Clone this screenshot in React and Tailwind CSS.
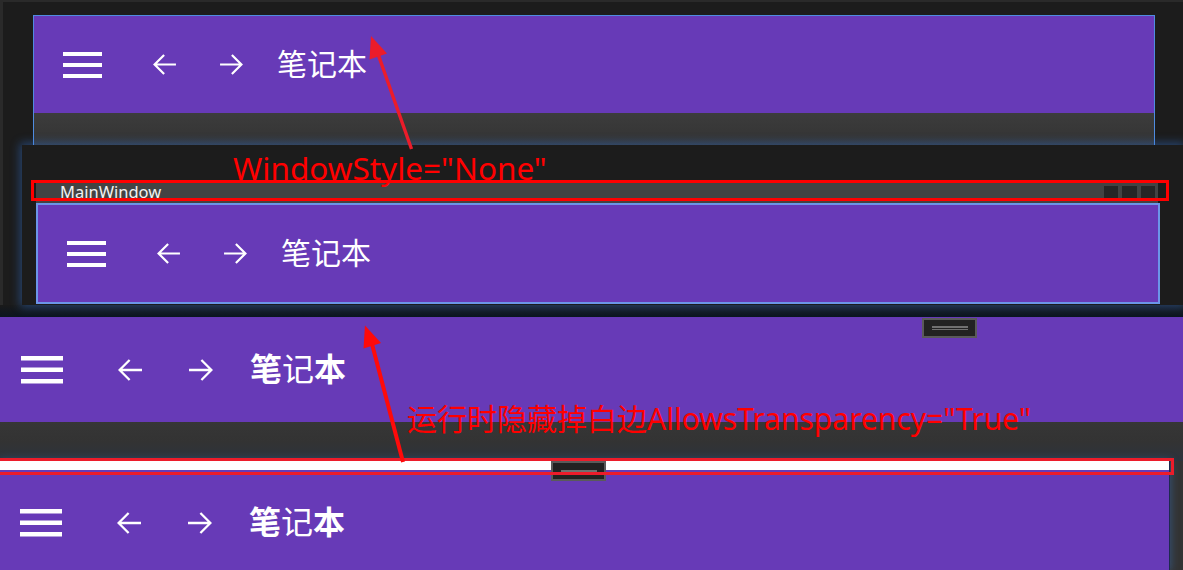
import React from "react";

function Hamburger({ big }) {
  if (big) {
    return (
      <svg width="42" height="28" viewBox="0 0 42 28" className="shrink-0">
        <rect x="0" y="0" width="42" height="4.5" fill="#fff" />
        <rect x="0" y="11.5" width="42" height="4.5" fill="#fff" />
        <rect x="0" y="23" width="42" height="4.5" fill="#fff" />
      </svg>
    );
  }
  return (
    <svg width="39" height="26" viewBox="0 0 39 26" className="shrink-0">
      <rect x="0" y="0" width="39" height="4" fill="#fff" />
      <rect x="0" y="11" width="39" height="4" fill="#fff" />
      <rect x="0" y="22" width="39" height="4" fill="#fff" />
    </svg>
  );
}

function Arrow({ dir, className }) {
  const d =
    dir === "left"
      ? "M1.6 11H24M11.6 1L1.6 11l10 10"
      : "M0 11H22.4M12.4 1l10 10-10 10";
  return (
    <svg viewBox="0 0 24 22" className={`shrink-0 ${className}`}>
      <path d={d} fill="none" stroke="#fff" strokeWidth="2.3" />
    </svg>
  );
}

function Toolbar({ big, className }) {
  return (
    <div className={`flex items-center bg-[#673ab7] ${className}`}>
      <Hamburger big={big} />
      {big ? (
        <>
          <Arrow dir="left" className="ml-[55px] w-[24px] h-[22px]" />
          <Arrow dir="right" className="ml-[47px] w-[24px] h-[22px]" />
          <span className="ml-[37px] mb-[5px] text-[32px] leading-none text-white font-bold font-['Noto_Sans_CJK_SC',sans-serif]">
            笔<span className="font-normal">记</span>本
          </span>
        </>
      ) : (
        <>
          <Arrow dir="left" className="ml-[51px] w-[23px] h-[21px]" />
          <Arrow dir="right" className="ml-[44px] w-[23px] h-[21px]" />
          <span className="ml-[34px] mb-[5px] text-[30px] leading-none text-white font-['Noto_Sans_CJK_SC',sans-serif]">
            笔记本
          </span>
        </>
      )}
    </div>
  );
}

function Gripper({ className, lines }) {
  return (
    <div
      className={`absolute w-[55px] h-[20px] border-2 border-[#5a5a5a] bg-[#222] flex flex-col items-center justify-center gap-[1px] ${className}`}
    >
      {Array.from({ length: lines }).map((_, i) => (
        <div key={i} className="w-[36px] h-[1.5px] bg-[#707070]" />
      ))}
    </div>
  );
}

export default function App() {
  return (
    <div className="relative w-[1183px] h-[570px] overflow-hidden bg-[#1c1c1c] font-['Noto_Sans','Noto_Sans_CJK_SC',sans-serif]">
      {/* window 1 */}
      <div className="h-[145px] border-l-[3px] border-t-2 border-[#2a2a2a] pl-[30px] pt-[13px] pr-[28px]">
        <div className="h-full border border-b-0 border-[#4f8ce0] flex flex-col">
          <Toolbar className="h-[97px] pl-[29px] shrink-0" />
          <div className="flex-1 bg-linear-to-b from-[#3c3c3c] to-[#333]" />
        </div>
      </div>

      {/* window 2 with title bar */}
      <div className="flex h-[160px] border-l-[3px] border-[#2a2a2a]">
        <div className="w-[19px]" />
        <div className="relative flex-1 bg-[#1c1c1c] shadow-[0_0_9px_2px_rgba(50,120,220,0.45)] pt-[37px] pl-[14px]">
          <div className="w-[1122px] h-[21px] bg-[#434343] flex items-start pl-[24px] pr-[3px]">
            <span className="text-[16.5px] leading-[19px] text-[#f2f2f2] font-['Noto_Sans',sans-serif]">
              MainWindow
            </span>
            <div className="ml-auto mt-[4px] flex gap-[4px]">
              <div className="w-[14px] h-[13px] bg-[#262626]" />
              <div className="w-[15px] h-[13px] bg-[#262626]" />
              <div className="w-[14px] h-[13px] bg-[#262626]" />
            </div>
          </div>
          <div className="w-[1124px] h-[101px] border-2 border-[#6b95e8]">
            <Toolbar className="h-full pl-[29px]" />
          </div>
        </div>
      </div>
      <div className="h-[12px] bg-linear-to-b from-[#1a1a1a] to-[#0b1520]" />

      {/* window 3, borderless */}
      <Toolbar big className="h-[105px] pl-[21px]" />
      <div className="h-[39px] bg-linear-to-b from-[#363636] via-[#333] to-[#2c333d]" />

      {/* window 4, transparency */}
      <div className="flex h-[109px]">
        <div className="relative w-[1170px] border-r border-[#1d2a4f] shadow-[0_0_8px_1px_rgba(60,130,220,0.4)]">
          <div className="h-[9px] bg-white" />
          <Toolbar big className="h-[105px] pl-[20px]" />
        </div>
        <div className="flex-1 bg-[#333]" />
      </div>

      {/* overlays */}
      <Gripper lines={2} className="left-[922px] top-[318px]" />
      <Gripper lines={1} className="left-[551px] top-[461px]" />

      <div className="absolute left-[31px] top-[180px] w-[1138px] h-[21px] border-[3px] border-[#ff0000]" />
      <div className="absolute left-[-5px] top-[458px] w-[1179px] h-[17px] border-[3px] border-[#ec1c2a]" />

      <div className="absolute left-[233px] top-[148px] text-[31.5px] leading-[40px] text-[#ff0000] whitespace-nowrap">
        WindowStyle="None"
      </div>
      <div className="absolute left-[407px] top-[399px] text-[30px] leading-[40px] text-[#ff0000] whitespace-nowrap">
        运行时隐藏掉白边AllowsTransparency="True"
      </div>

      <svg className="absolute inset-0 pointer-events-none" width="1183" height="570">
        <line x1="411.5" y1="149" x2="378" y2="54" stroke="#ec1c2a" strokeWidth="3.4" />
        <polygon points="371,36 369.5,59.5 387,53.5" fill="#ec1c2a" />
        <line x1="403" y1="462" x2="372" y2="344" stroke="#ff0a0a" strokeWidth="4" />
        <polygon points="365,325.5 363.5,348.5 381,343" fill="#ff0a0a" />
      </svg>
    </div>
  );
}
